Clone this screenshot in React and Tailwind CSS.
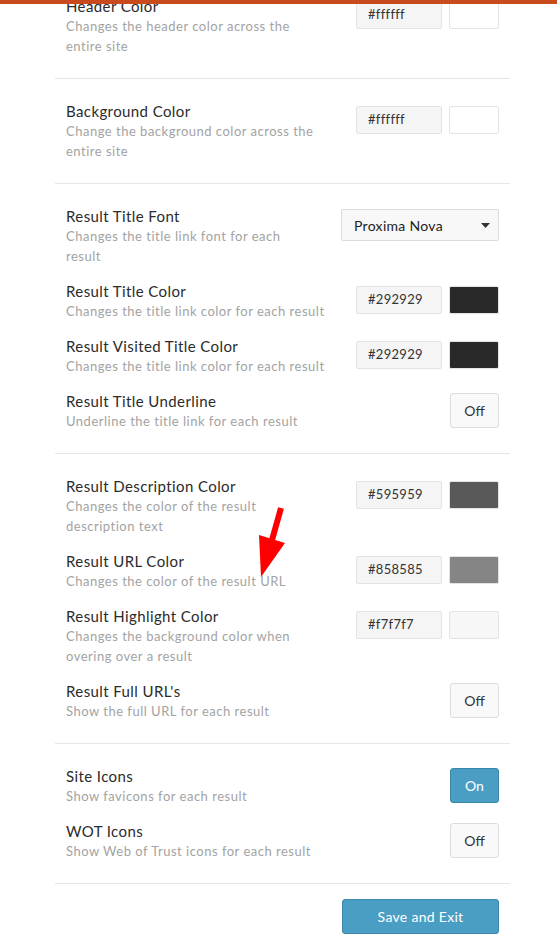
import React from "react";

const sections = [
  [
    { title: "Header Color", desc: "Changes the header color across the entire site", type: "color", value: "#ffffff" },
  ],
  [
    { title: "Background Color", desc: "Change the background color across the entire site", type: "color", value: "#ffffff" },
  ],
  [
    { title: "Result Title Font", desc: "Changes the title link font for each result", type: "select", value: "Proxima Nova" },
    { title: "Result Title Color", desc: "Changes the title link color for each result", type: "color", value: "#292929" },
    { title: "Result Visited Title Color", desc: "Changes the title link color for each result", type: "color", value: "#292929" },
    { title: "Result Title Underline", desc: "Underline the title link for each result", type: "toggle", value: false },
  ],
  [
    { title: "Result Description Color", desc: "Changes the color of the result description text", type: "color", value: "#595959" },
    { title: "Result URL Color", desc: "Changes the color of the result URL", type: "color", value: "#858585" },
    { title: "Result Highlight Color", desc: "Changes the background color when overing over a result", type: "color", value: "#f7f7f7" },
    { title: "Result Full URL's", desc: "Show the full URL for each result", type: "toggle", value: false },
  ],
  [
    { title: "Site Icons", desc: "Show favicons for each result", type: "toggle", value: true },
    { title: "WOT Icons", desc: "Show Web of Trust icons for each result", type: "toggle", value: false },
  ],
];

const Control = ({ item }) => {
  if (item.type === "color") {
    return (
      <div className="flex items-center gap-[7px]">
        <div className="w-[86px] h-[28px] rounded-[2px] border border-[#e3e3e3] bg-[#f5f5f5] px-[11px] flex items-center text-[13px] tracking-[0.3px] text-[#333]">
          {item.value}
        </div>
        <div
          className="w-[50px] h-[28px] rounded-[2px] border border-[#e3e3e3]"
          style={{ backgroundColor: item.value }}
        />
      </div>
    );
  }
  if (item.type === "select") {
    return (
      <div className="w-[158px] h-[32px] rounded-[2px] border border-[#dcdcdc] bg-[#f8f8f8] pl-[12px] pr-[8px] flex items-center justify-between text-[14px] tracking-[0.3px] text-[#222]">
        <span>{item.value}</span>
        <svg width="9" height="5" viewBox="0 0 9 5">
          <polygon points="0,0 9,0 4.5,5" fill="#333" />
        </svg>
      </div>
    );
  }
  return item.value ? (
    <button className="w-[49px] h-[35px] rounded-[3px] border border-[#3b87a9] bg-[#4a9ec4] text-white text-[14px]">
      On
    </button>
  ) : (
    <button className="w-[49px] h-[35px] rounded-[3px] border border-[#dcdcdc] bg-[#f9f9f9] text-[#333] text-[14px]">
      Off
    </button>
  );
};

const App = () => {
  return (
    <div className="relative w-[557px] h-[947px] overflow-hidden bg-white" style={{ fontFamily: "Lato, 'Open Sans', sans-serif" }}>
      {/* header edge */}
      <div className="absolute top-0 left-0 w-full h-[4px] bg-[#c94a1d] z-10" />

      <div className="ml-[55px] w-[455px] -mt-[26px]">
        {sections.map((rows, i) => (
          <div key={i} className="pt-[22px] pb-[22px] border-b border-[#e6e6e6] flex flex-col gap-[15px]">
            {rows.map((item) => (
              <div key={item.title} className="flex items-start gap-[28px] pl-[11px] pr-[11px]">
                <div className="flex-1 min-w-0">
                  <div className="text-[15px] leading-[20px] tracking-[0.4px] text-[#2b2b2b]">{item.title}</div>
                  <div className="text-[13px] leading-[20px] tracking-[0.5px] text-[#a3a3a3]">{item.desc}</div>
                </div>
                <div className="h-[38px] flex items-center shrink-0">
                  <Control item={item} />
                </div>
              </div>
            ))}
          </div>
        ))}

        <div className="flex justify-end pr-[11px] pt-[15px]">
          <button className="w-[157px] h-[35px] rounded-[3px] border border-[#3b87a9] bg-[#4a9ec4] text-white text-[14px] tracking-[0.3px]">
            Save and Exit
          </button>
        </div>
      </div>

      {/* red annotation arrow */}
      <svg className="absolute left-[250px] top-[500px]" width="40" height="80" viewBox="0 0 40 80">
        <line x1="31" y1="8" x2="22" y2="40" stroke="#ff0000" strokeWidth="6" />
        <polygon points="9,35 35,43 11,77" fill="#ff0000" />
      </svg>
    </div>
  );
};

export default App;
